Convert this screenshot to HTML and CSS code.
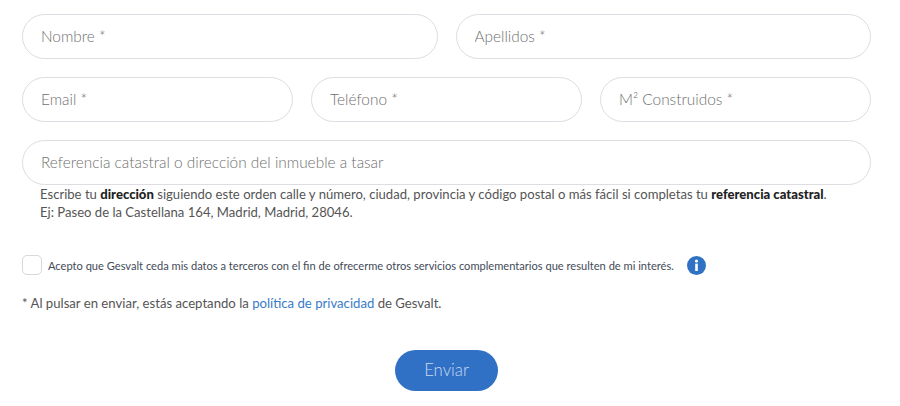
FILE: index.html
```html
<!DOCTYPE html>
<html>
  <head>
    <title>Tasación</title>
    <link rel="stylesheet" href="styles.css">
  </head>
  <body>
    <form class="form">
      <div class="row row2">
        <input class="field" type="text" placeholder="Nombre *">
        <input class="field" type="text" placeholder="Apellidos *">
      </div>
      <div class="row row3">
        <input class="field" type="text" placeholder="Email *">
        <input class="field" type="text" placeholder="Teléfono *">
        <input class="field" type="text" placeholder="M² Construidos *">
      </div>
      <input class="field" type="text" placeholder="Referencia catastral o dirección del inmueble a tasar">
      <p class="help">
        Escribe tu <b>dirección</b> siguiendo este orden calle y número, ciudad, provincia y código postal o más fácil si completas tu <b>referencia catastral</b>.<br>
        Ej: Paseo de la Castellana 164, Madrid, Madrid, 28046.
      </p>
      <div class="consent">
        <span class="check"></span>
        <span class="consent-text">Acepto que Gesvalt ceda mis datos a terceros con el fin de ofrecerme otros servicios complementarios que resulten de mi interés.</span>
        <svg class="info" width="19" height="19" viewBox="0 0 19 19">
          <circle cx="9.5" cy="9.5" r="9.5" fill="#2f72c4"/>
          <circle cx="9.5" cy="5" r="1.6" fill="#fff"/>
          <rect x="8.2" y="7.6" width="2.6" height="7.4" fill="#fff"/>
        </svg>
      </div>
      <p class="legal">* Al pulsar en enviar, estás aceptando la <a href="#">política de privacidad</a> de Gesvalt.</p>
      <div class="actions">
        <button class="send" type="button">Enviar</button>
      </div>
    </form>
  </body>
</html>
```

FILE: styles.css
```css
body {
  margin: 0;
  background-color: white;
  font-family: "Lato", "Open Sans", sans-serif;
}
.form {
  display: flex;
  flex-direction: column;
  padding: 14px 29px 0 22px;
}
.row {
  display: grid;
  gap: 18px;
  margin-bottom: 18px;
}
.row2 {
  grid-template-columns: 1fr 1fr;
}
.row3 {
  grid-template-columns: 1fr 1fr 1fr;
}
.field {
  box-sizing: border-box;
  width: 100%;
  height: 45px;
  padding: 0 18px 1px;
  border: 1px solid #dddde3;
  border-radius: 23px;
  background-color: white;
  font-family: inherit;
  font-size: 15.4px;
  font-weight: 300;
}
.field::placeholder {
  color: #6f6f6f;
  opacity: 1;
}
.help {
  margin: 0;
  padding-left: 18px;
  color: #555;
  font-size: 13.1px;
  line-height: 18px;
}
.help b {
  color: #222;
  font-weight: 900;
}
.consent {
  display: flex;
  align-items: center;
  margin-top: 34px;
}
.check {
  box-sizing: border-box;
  width: 20px;
  height: 20px;
  border: 1px solid #d8d8dc;
  border-radius: 5px;
}
.consent-text {
  margin-left: 6px;
  color: #434b58;
  font-size: 11.1px;
}
.info {
  margin-left: 13px;
}
.legal {
  margin: 19px 0 0;
  color: #555;
  font-size: 13.15px;
  line-height: 18px;
}
.legal a {
  color: #3a7bc8;
  text-decoration: none;
}
.actions {
  display: flex;
  justify-content: center;
  margin-top: 38px;
}
.send {
  width: 103px;
  height: 41px;
  padding: 0 0 2px;
  border: none;
  border-radius: 21px;
  background-color: #3071c5;
  color: #c9d9f1;
  font-family: inherit;
  font-size: 16.8px;
  font-weight: 300;
}
```
